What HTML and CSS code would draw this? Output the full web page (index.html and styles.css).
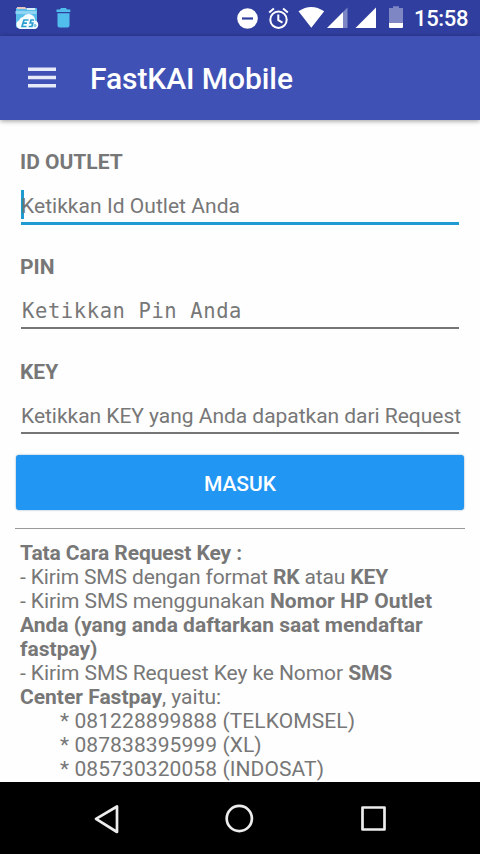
FILE: index.html
```html
<!DOCTYPE html>
<html lang="id">
<head>
<meta charset="utf-8">
<title>FastKAI Mobile</title>
<link rel="stylesheet" href="styles.css">
</head>
<body>
<div class="screen">
  <header class="status">
    <svg class="status-icons" width="410" height="36" viewBox="0 0 410 36">
      <path fill="#58bde8" d="M16 8h20q1 0 1 1v17q0 2-2 2H18q-2 0-2-2z"/>
      <path fill="#e9c5c0" d="M17 7h8l2 2h-10z"/>
      <path fill="#d8eef8" d="M27 8h8v2h-8z"/>
      <path fill="#8ed5f4" d="M15.500 11h21v3h-21z"/>
      <path fill="#f4fcff" d="M20 29a4.500 4.500 0 0 1-1-8.500 5 5 0 0 1 4-3.500 6.500 6.500 0 0 1 12 3.500 4.400 4.400 0 0 1 0 8.500z"/>
      <path fill="none" stroke="#2a9ed0" stroke-width="1.700" d="M28.500 20H24l-2 6.500h4.500M23 23.200h4M34 20h-3l-.8 3h2.600l-.9 3.500h-3.200"/>
      <circle cx="35" cy="25.500" r="1" fill="none" stroke="#2a9ed0" stroke-width=".8"/>
      <path fill="#51bdec" d="M56.500 9.500H60L61 8h5l1 1.500h3.300V12H56.500zM57.500 13.200h12V25.500a2 2 0 0 1-2 2h-8a2 2 0 0 1-2-2z"/>
      <circle cx="247.500" cy="18.500" r="10.300" fill="#fff"/>
      <path fill="#303f9f" d="M242 17.400h11v2.200h-11z"/>
      <g fill="none" stroke="#fff" stroke-width="2"><circle cx="278.500" cy="19.700" r="8.200"/><path d="M278.300 14.500v5.700l4.200 2.500M269.200 12.500l4.700-3.900M287.800 12.500l-4.700-3.900"/></g>
      <path fill="#fff" d="M298.500 11.300q12.700-8.600 25.700 0L311.300 27.800zM327 28l16-16v16zM355.500 28 376 7.500V28z"/>
      <path fill="#7d87c5" d="M343 12l4.500-4.500V28H343z"/>
      <path fill="#7e87c4" d="M389 8h4V6.300h6V8h4v15h-14z"/>
      <path fill="#fff" d="M389 23h14v4q0 1-1 1h-12q-1 0-1-1z"/>
    </svg>
    <span class="clock">15:58</span>
  </header>
  <div class="appbar">
    <svg class="menu" width="28" height="24" viewBox="0 0 28 24"><path fill="#e6e9f8" d="M0 1.400h28v3.500H0zM0 9.700h28v3.500H0zM0 18h28v3.500H0z"/></svg>
    <h1>FastKAI Mobile</h1>
  </div>
  <main>
    <div class="field focused"><label>ID OUTLET</label><div class="input"><span class="hint id-hint">Ketikkan Id Outlet Anda</span></div></div>
    <div class="field"><label>PIN</label><div class="input"><span class="hint mono">Ketikkan Pin Anda</span></div></div>
    <div class="field"><label>KEY</label><div class="input"><span class="hint key-hint">Ketikkan KEY yang Anda dapatkan dari Request</span></div></div>
    <button>MASUK</button>
    <hr>
    <div class="info">
      <div class="snug"><b>Tata Cara Request Key :</b></div>
      <div class="tight">- Kirim SMS dengan format <b>RK</b> atau <b>KEY</b></div>
      <div><span class="snug">- Kirim SMS menggunakan </span><b class="wide">Nomor HP Outlet</b></div>
      <div><b>Anda (yang anda daftarkan saat mendaftar</b></div>
      <div><b>fastpay)</b></div>
      <div class="snug">- Kirim SMS Request Key ke Nomor <b>SMS</b></div>
      <div><b>Center Fastpay</b>, yaitu:</div>
      <div class="number">* 081228899888 (TELKOMSEL)</div>
      <div class="number">* 087838395999 (XL)</div>
      <div class="number">* 085730320058 (INDOSAT)</div>
    </div>
  </main>
  <nav>
    <svg width="480" height="72" viewBox="0 0 480 72" fill="none" stroke="#ededed" stroke-width="2.700" stroke-linejoin="round"><path d="M117 24.500v25.500L96 36.800z"/><circle cx="239.300" cy="36.500" r="12.600"/><path d="M362.500 25.500h22v22h-22z"/></svg>
  </nav>
</div>
</body>
</html>
```
FILE: styles.css
```css
* { box-sizing: border-box; }
body { margin: 0; font-family: Roboto, sans-serif; }
.screen { width: 480px; height: 854px; display: flex; flex-direction: column; overflow: hidden; background: #fefefe; color: #777; }
svg { display: block; flex: none; }
.status { height: 36px; flex: none; display: flex; background: #303f9f; color: #fff; }
.clock { margin-left: 4px; font-size: 22px; line-height: 37px; font-weight: 500; letter-spacing: -.35px; white-space: nowrap; }
.appbar { height: 84px; flex: none; display: flex; align-items: center; padding-left: 28px; gap: 34px; background: #3f51b5; color: #fff; box-shadow: 0 1px 5px rgba(0,0,0,.4); z-index: 1; }
h1 { margin: 2px 0 0; font-size: 30px; line-height: 36px; font-weight: 500; letter-spacing: -.07px; white-space: nowrap; }
main { flex: 1; min-height: 0; overflow: hidden; padding: 29px 15px 0; font-size: 21px; }
.field { height: 105px; padding-left: 5px; }
.field label { display: block; height: 26px; line-height: 26px; font-weight: 700; }
.input { margin: 15px 6px 0 1px; width: 438px; height: 34px; border-bottom: 2px solid #757575; line-height: 32px; }
.focused .input { height: 35px; border-bottom: 3px solid #1f9bd1; }
.focused .input::before { content: ""; display: block; width: 3px; height: 29px; margin-bottom: -29px; background: #1f9bd1; }
.hint { display: block; white-space: nowrap; }
.id-hint { letter-spacing: .04px; }
.key-hint { letter-spacing: -.03px; }
.mono { padding-left: 1px; font-family: "DejaVu Sans Mono", monospace; font-size: 20.500px; letter-spacing: .6px; }
button { display: block; width: 448px; height: 55px; margin: -9px 0 0 1px; padding: 3px 0 0; border: 0; border-radius: 3px; background: #2196f3; color: #fff; font: 500 21px Roboto, sans-serif; box-shadow: 0 0 2px rgba(0,70,120,.5); }
hr { height: 1px; margin: 18px 0 12px; border: 0; background: #999; }
.info { padding-left: 5px; line-height: 24px; white-space: nowrap; }
.snug { letter-spacing: -.08px; }
.tight { letter-spacing: -.14px; }
.wide { letter-spacing: .12px; }
.number { padding-left: 40px; letter-spacing: .09px; }
nav { flex: none; height: 72px; background: #000; }
```
